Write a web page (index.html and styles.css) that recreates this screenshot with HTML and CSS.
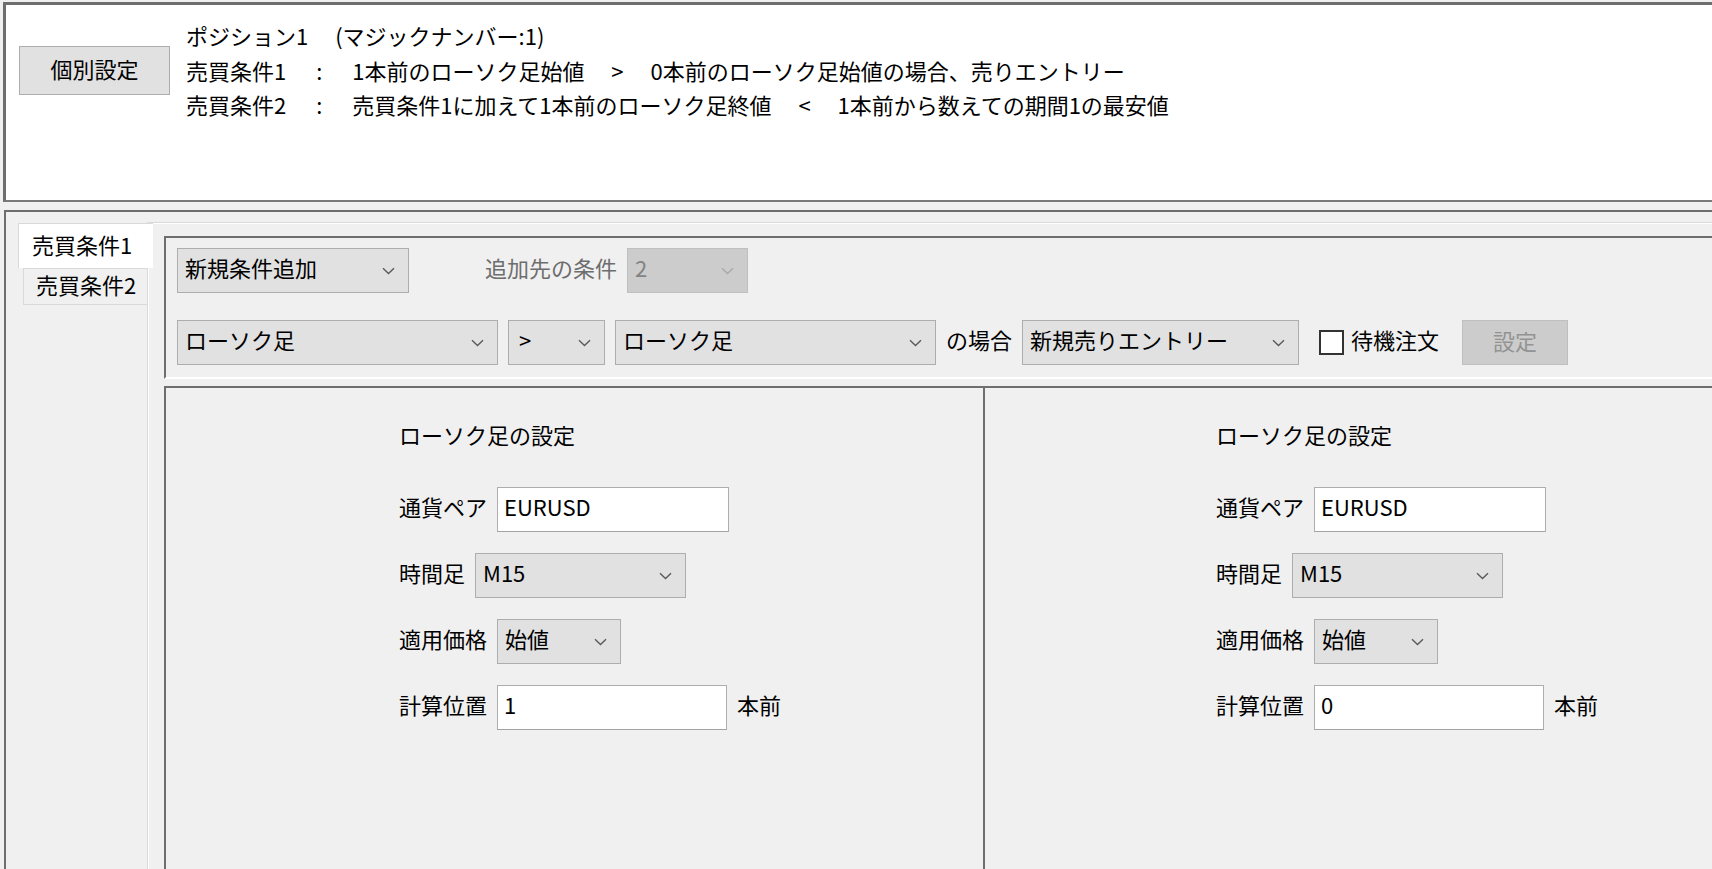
FILE: index.html
```html
<!DOCTYPE html>
<html lang="ja">
<head>
<meta charset="utf-8">
<title>個別設定</title>
<link rel="stylesheet" href="styles.css">
</head>
<body>
<div class="top-panel">
  <div class="btn indiv">個別設定</div>
  <div class="summary">
    <div>ポジション1　 (マジックナンバー:1)</div>
    <div>売買条件1<span class="op">:</span>1本前のローソク足始値<span class="op">&gt;</span>0本前のローソク足始値の場合、売りエントリー</div>
    <div>売買条件2<span class="op">:</span>売買条件1に加えて1本前のローソク足終値<span class="op">&lt;</span>1本前から数えての期間1の最安値</div>
  </div>
</div>

<div class="tabctl">
  <div class="tabs">
    <div class="tab active">売買条件1</div>
    <div class="tab inactive">売買条件2</div>
  </div>
  <div class="tabpage">
    <div class="cond-box">
      <div class="row">
        <div class="select w232"><span>新規条件追加</span><svg class="chev" width="13" height="8" viewBox="0 0 13 8"><path d="M1 1.2l5.5 5.3L12 1.2" fill="none" stroke="#5a5a5a" stroke-width="1.4"/></svg></div>
        <span class="txt label-disabled">追加先の条件</span>
        <div class="select disabled w121"><span>2</span><svg class="chev" width="13" height="8" viewBox="0 0 13 8"><path d="M1 1.2l5.5 5.3L12 1.2" fill="none" stroke="#a9a9a9" stroke-width="1.4"/></svg></div>
      </div>
      <div class="row row2">
        <div class="select w321"><span>ローソク足</span><svg class="chev" width="13" height="8" viewBox="0 0 13 8"><path d="M1 1.2l5.5 5.3L12 1.2" fill="none" stroke="#5a5a5a" stroke-width="1.4"/></svg></div>
        <div class="select w97 op-select"><span>&gt;</span><svg class="chev" width="13" height="8" viewBox="0 0 13 8"><path d="M1 1.2l5.5 5.3L12 1.2" fill="none" stroke="#5a5a5a" stroke-width="1.4"/></svg></div>
        <div class="select w321"><span>ローソク足</span><svg class="chev" width="13" height="8" viewBox="0 0 13 8"><path d="M1 1.2l5.5 5.3L12 1.2" fill="none" stroke="#5a5a5a" stroke-width="1.4"/></svg></div>
        <span class="txt">の場合</span>
        <div class="select w277"><span>新規売りエントリー</span><svg class="chev" width="13" height="8" viewBox="0 0 13 8"><path d="M1 1.2l5.5 5.3L12 1.2" fill="none" stroke="#5a5a5a" stroke-width="1.4"/></svg></div>
        <label class="check"><span class="checkbox"></span><span class="txt">待機注文</span></label>
        <div class="btn disabled-btn">設定</div>
      </div>
    </div>
    <div class="detail-box">
      <div class="half">
        <div class="title">ローソク足の設定</div>
        <div class="field first"><span class="txt">通貨ペア</span><div class="input w232">EURUSD</div></div>
        <div class="field"><span class="txt">時間足</span><div class="select w211"><span>M15</span><svg class="chev" width="13" height="8" viewBox="0 0 13 8"><path d="M1 1.2l5.5 5.3L12 1.2" fill="none" stroke="#5a5a5a" stroke-width="1.4"/></svg></div></div>
        <div class="field"><span class="txt">適用価格</span><div class="select w124"><span>始値</span><svg class="chev" width="13" height="8" viewBox="0 0 13 8"><path d="M1 1.2l5.5 5.3L12 1.2" fill="none" stroke="#5a5a5a" stroke-width="1.4"/></svg></div></div>
        <div class="field"><span class="txt">計算位置</span><div class="input w230">1</div><span class="txt">本前</span></div>
      </div>
      <div class="half">
        <div class="title">ローソク足の設定</div>
        <div class="field first"><span class="txt">通貨ペア</span><div class="input w232">EURUSD</div></div>
        <div class="field"><span class="txt">時間足</span><div class="select w211"><span>M15</span><svg class="chev" width="13" height="8" viewBox="0 0 13 8"><path d="M1 1.2l5.5 5.3L12 1.2" fill="none" stroke="#5a5a5a" stroke-width="1.4"/></svg></div></div>
        <div class="field"><span class="txt">適用価格</span><div class="select w124"><span>始値</span><svg class="chev" width="13" height="8" viewBox="0 0 13 8"><path d="M1 1.2l5.5 5.3L12 1.2" fill="none" stroke="#5a5a5a" stroke-width="1.4"/></svg></div></div>
        <div class="field"><span class="txt">計算位置</span><div class="input w230">0</div><span class="txt">本前</span></div>
      </div>
    </div>
  </div>
</div>
</body>
</html>
```
FILE: styles.css
```css
* { box-sizing: border-box; }
html, body { margin: 0; padding: 0; }
body {
  width: 1712px;
  height: 869px;
  overflow: hidden;
  background: #f0f0f0;
  font-family: "Noto Sans CJK JP", "Noto Sans", sans-serif;
  font-size: 22px;
  color: #000;
  display: flex;
  flex-direction: column;
}

/* text nudged up to sit like the Windows font does */
.txt { padding-bottom: 6px; line-height: 1.2; }

/* ---------- top summary panel ---------- */
.top-panel {
  flex: none;
  height: 200px;
  margin: 2px 0 0 3px;
  background: #fff;
  border-top: 3px solid #6e6e6e;
  border-left: 3px solid #6e6e6e;
  border-bottom: 2px solid #7a7a7a;
  display: flex;
  align-items: flex-start;
}
.btn {
  background: #e1e1e1;
  border: 1px solid #adadad;
  display: flex;
  align-items: center;
  justify-content: center;
  line-height: 1.2;
  padding-bottom: 5px;
}
.indiv {
  margin: 41px 0 0 13px;
  width: 151px;
  height: 49px;
}
.summary {
  margin: 13px 0 0 16px;
  line-height: 34.5px;
  white-space: nowrap;
}
.op {
  display: inline-block;
  width: 66px;
  text-align: center;
}

/* ---------- tab control ---------- */
.tabctl {
  flex: 1;
  min-height: 0;
  margin: 8px 0 0 4px;
  border-top: 2px solid #6e6e6e;
  border-left: 2px solid #6e6e6e;
  padding-top: 10px;
  display: flex;
}
.tabs {
  flex: none;
  width: 141px;
  padding-top: 1px;
}
.tab {
  display: flex;
  align-items: center;
  line-height: 1.2;
  white-space: nowrap;
  padding-bottom: 4px;
}
.tab.active {
  position: relative;
  z-index: 1;
  height: 45px;
  margin-left: 12px;
  margin-right: -6px;
  width: 135px;
  background: #fff;
  border-top: 1px solid #d9d9d9;
  border-left: 1px solid #d9d9d9;
  padding-left: 13px;
}
.tab.inactive {
  height: 37px;
  margin-left: 17px;
  width: 124px;
  border: 1px solid #d9d9d9;
  border-right: none;
  padding-left: 12px;
}
.tabpage {
  flex: 1;
  min-width: 0;
  border-top: 1px solid #d9d9d9;
  border-left: 1px solid #d9d9d9;
  box-shadow: inset 1px 1px 0 #fff;
  padding: 13px 0 0 16px;
  display: flex;
  flex-direction: column;
}

/* ---------- condition box ---------- */
.cond-box {
  flex: none;
  border-top: 2px solid #6e6e6e;
  border-left: 2px solid #6e6e6e;
  border-bottom: 2px solid #fff;
  padding: 10px 0 12px 11px;
  display: flex;
  flex-direction: column;
  gap: 27px;
}
.row {
  display: flex;
  align-items: center;
  height: 45px;
}
.row2 { gap: 10px; }

.select {
  flex: none;
  height: 45px;
  background: #e1e1e1;
  border: 1px solid #adadad;
  display: flex;
  align-items: center;
  justify-content: space-between;
  padding: 0 13px 0 7px;
  line-height: 1.2;
  white-space: nowrap;
}
.select > span { padding-bottom: 6px; }
.select.disabled {
  background: #cccccc;
  border-color: #bfbfbf;
  color: #838383;
}
.chev { flex: none; display: block; }
.op-select { padding-left: 10px; }

.w97 { width: 97px; }
.w121 { width: 121px; }
.w124 { width: 124px; }
.w211 { width: 211px; }
.w230 { width: 230px; }
.w232 { width: 232px; }
.w277 { width: 277px; }
.w321 { width: 321px; }

.label-disabled {
  margin: 0 10px 0 76px;
  color: #6d6d6d;
  white-space: nowrap;
}

.check {
  display: flex;
  align-items: center;
  gap: 7px;
  margin-left: 10px;
  white-space: nowrap;
}
.checkbox {
  width: 25px;
  height: 25px;
  border: 2px solid #333;
  background: #fff;
}
.disabled-btn {
  width: 106px;
  height: 45px;
  margin-left: 13px;
  background: #cccccc;
  border-color: #bfbfbf;
  color: #939393;
}

/* ---------- detail box ---------- */
.detail-box {
  flex: 1;
  margin-top: 7px;
  border-top: 2px solid #6e6e6e;
  border-left: 2px solid #6e6e6e;
  display: flex;
}
.half {
  flex: none;
  width: 817px;
  padding: 29px 0 0 233px;
}
.half + .half {
  border-left: 2px solid #6e6e6e;
  padding-left: 231px;
}
.title {
  line-height: 34px;
  white-space: nowrap;
}
.field {
  display: flex;
  align-items: center;
  gap: 10px;
  height: 45px;
  margin-top: 21px;
  white-space: nowrap;
}
.field.first { margin-top: 36px; }
.input {
  flex: none;
  height: 45px;
  background: #fff;
  border: 1px solid #adadad;
  border-bottom-color: #a3a3a3;
  padding: 0 0 6px 6px;
  display: flex;
  align-items: center;
  line-height: 1.2;
}
```
